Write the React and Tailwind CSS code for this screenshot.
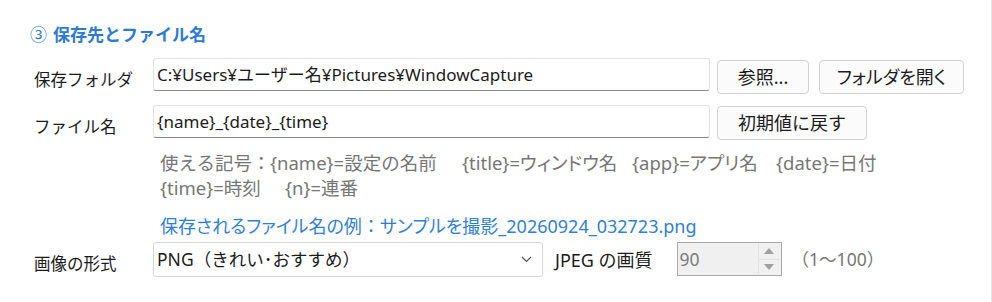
import React from "react";

const FONT = { fontFamily: '"Noto Sans", "Noto Sans CJK JP", sans-serif' };

function Btn({ children, className = "" }) {
  return (
    <button
      className={
        "h-[34px] rounded-[4px] border border-[#d2d2d2] bg-[#fbfbfb] text-[18px] leading-none text-[#1b1b1b] " +
        className
      }
    >
      {children}
    </button>
  );
}

function TextBox({ value, className = "" }) {
  return (
    <div
      className={
        "flex h-[33px] items-center whitespace-nowrap rounded-[3px] border border-[#e3e3e3] border-b-[#8a8a8a] bg-white pl-[3px] text-[17px] text-[#1b1b1b] " +
        className
      }
    >
      {value}
    </div>
  );
}

export default function App() {
  return (
    <div
      className="relative h-[302px] w-[992px] overflow-hidden border-r border-[#e8e8e8] bg-white"
      style={FONT}
    >
      <div className="pl-[30px] pt-[22px]">
        <div className="flex h-[24px] items-center text-[17px] font-bold leading-none text-[#2b7bd6]">
          <span className="font-normal">③</span>
          <span className="ml-[6px]">保存先とファイル名</span>
        </div>

        {/* row 1 */}
        <div className="mt-[12px] flex items-start">
          <div className="flex h-[33px] w-[123px] items-center whitespace-nowrap pl-[4px] pt-[12px] text-[16.5px] text-[#1b1b1b]">
            保存フォルダ
          </div>
          <TextBox
            value="C:¥Users¥ユーザー名¥Pictures¥WindowCapture"
            className="w-[557px]"
          />
          <Btn className="ml-[7px] mt-[2px] w-[92px]">参照...</Btn>
          <Btn className="ml-[10px] mt-[2px] w-[145px] [font-feature-settings:'palt']">
            フォルダを開く
          </Btn>
        </div>

        {/* row 2 */}
        <div className="mt-[11px] flex items-start">
          <div className="flex h-[33px] w-[123px] items-center whitespace-nowrap pl-[4px] pt-[12px] text-[16.5px] text-[#1b1b1b]">
            ファイル名
          </div>
          <TextBox value="{name}_{date}_{time}" className="w-[557px]" />
          <Btn className="ml-[7px] mt-[1px] w-[150px]">初期値に戻す</Btn>
        </div>

        {/* hints */}
        <div className="ml-[130px] mt-[10px] text-[18.5px] leading-[25px] text-[#767676]">
          <div className="flex whitespace-nowrap">
            <span className="w-[110px] shrink-0">使える記号：</span>
            <span className="w-[192px] shrink-0">{"{name}"}=設定の名前</span>
            <span className="w-[170px] shrink-0 [font-feature-settings:'palt']">
              {"{title}"}=ウィンドウ名
            </span>
            <span className="w-[144px] shrink-0 [font-feature-settings:'palt']">
              {"{app}"}=アプリ名
            </span>
            <span className="shrink-0">{"{date}"}=日付</span>
          </div>
          <div className="flex whitespace-nowrap">
            <span className="w-[125px] shrink-0">{"{time}"}=時刻</span>
            <span className="shrink-0">{"{n}"}=連番</span>
          </div>
          <div className="mt-[14px] whitespace-nowrap text-[18px] text-[#2f7fd6] [font-feature-settings:'palt']">
            保存されるファイル名の例<span className="[font-feature-settings:normal]">：</span>サンプルを撮影_20260924_032723.png
          </div>
        </div>

        {/* row 3 */}
        <div className="mt-[3px] flex items-start">
          <div className="flex h-[35px] w-[123px] items-center whitespace-nowrap pl-[4px] pt-[9px] text-[16.5px] text-[#1b1b1b]">
            画像の形式
          </div>
          <div className="flex h-[35px] w-[390px] items-center justify-between rounded-[3px] border border-[#d7d7d7] bg-white pl-[3px] pr-[10px] text-[17.5px] text-[#1b1b1b]">
            <span className="whitespace-nowrap">PNG（きれい･おすすめ）</span>
            <svg width="11" height="7" viewBox="0 0 11 7" fill="none">
              <path d="M1 1l4.5 4.5L10 1" stroke="#555" strokeWidth="1.1" />
            </svg>
          </div>
          <div className="ml-[12px] flex h-[35px] items-center whitespace-nowrap pt-[2px] text-[18px] text-[#1b1b1b]">
            JPEG の画質
          </div>
          <div className="ml-[24px] flex h-[34px] w-[105px] items-stretch border border-[#a9a9a9] bg-[#f0f0f0]">
            <div className="flex flex-1 items-center pl-[2px] text-[17.5px] text-[#7a7a7a]">90</div>
            <div className="my-[1px] mr-[1px] flex w-[22px] flex-col border-l border-[#e2e2e2]">
              <div className="flex flex-1 items-center justify-center border-b border-[#e2e2e2]">
                <svg width="10" height="6" viewBox="0 0 10 6">
                  <path d="M0 6L5 0l5 6z" fill="#a0a0a0" />
                </svg>
              </div>
              <div className="flex flex-1 items-center justify-center">
                <svg width="10" height="6" viewBox="0 0 10 6">
                  <path d="M0 0l5 6 5-6z" fill="#a0a0a0" />
                </svg>
              </div>
            </div>
          </div>
          <div className="ml-[10px] flex h-[35px] items-center whitespace-nowrap text-[17.5px] text-[#767676]">
            （1〜100）
          </div>
        </div>
      </div>
    </div>
  );
}
